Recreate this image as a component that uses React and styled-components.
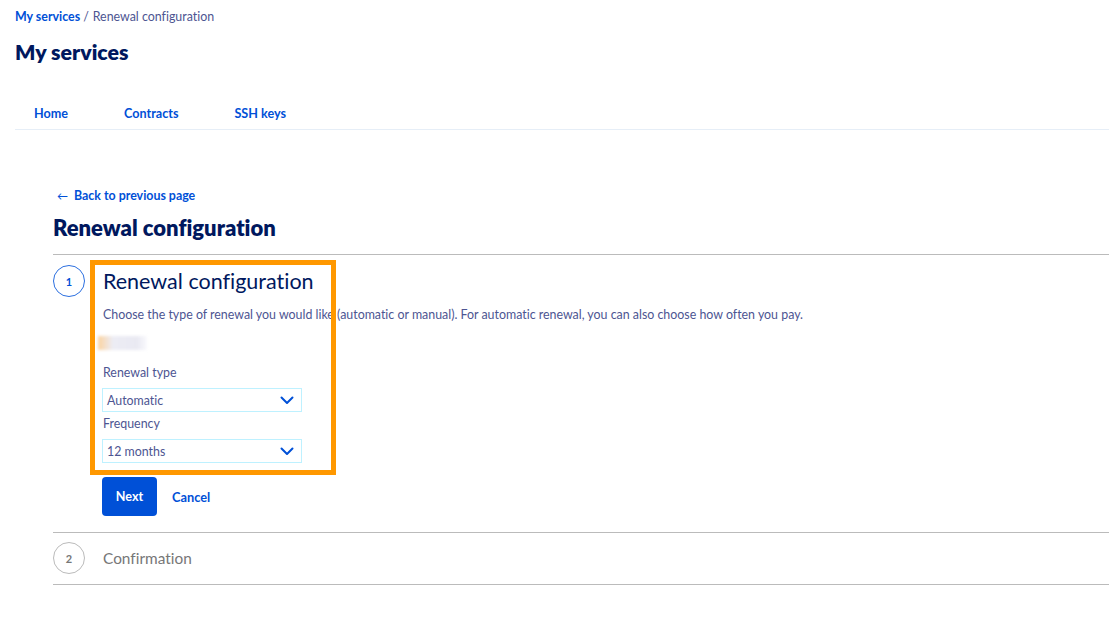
import React from 'react'
import styled, { createGlobalStyle } from 'styled-components'

const GlobalStyle = createGlobalStyle`
    body {
        margin: 0;
        background: #fff;
        font-family: Lato, "Open Sans", sans-serif;
        font-variant-ligatures: none;
    }
`

const blue = '#0050d7'
const navy = '#00185e'
const text = '#4d5592'

export default function App() {
    return <Page>
        <GlobalStyle />
        <Top>
            <Breadcrumb>
                <Crumb>My services</Crumb>
                <Sep>/</Sep>
                <Current>Renewal configuration</Current>
            </Breadcrumb>
            <PageTitle>My services</PageTitle>
        </Top>
        <Tabs>
            <Tab>Home</Tab>
            <Tab>Contracts</Tab>
            <Tab>SSH keys</Tab>
        </Tabs>
        <Main>
            <BackLink><Arrow>←</Arrow>Back to previous page</BackLink>
            <SectionTitle>Renewal configuration</SectionTitle>
            <Steps>
                <Step>
                    <StepNumber active>1</StepNumber>
                    <StepBody>
                        <Highlight />
                        <StepTitle active>Renewal configuration</StepTitle>
                        <Description>Choose the type of renewal you would like (automatic or manual). For automatic renewal, you can also choose how often you pay.</Description>
                        <Blurred />
                        <Field>
                            <Label>Renewal type</Label>
                            <Select>Automatic<Chevron /></Select>
                        </Field>
                        <Field>
                            <Label>Frequency</Label>
                            <Select>12 months<Chevron /></Select>
                        </Field>
                        <Actions>
                            <PrimaryButton>Next</PrimaryButton>
                            <LinkButton>Cancel</LinkButton>
                        </Actions>
                    </StepBody>
                </Step>
                <Step>
                    <StepNumber>2</StepNumber>
                    <StepBody>
                        <StepTitle>Confirmation</StepTitle>
                    </StepBody>
                </Step>
            </Steps>
        </Main>
    </Page>
}

const Chevron = () => <ChevronSvg viewBox="0 0 14 9" width="14" height="9">
    <path d="M1.5 1.5 L7 7 L12.5 1.5" fill="none" stroke={blue} strokeWidth="2" strokeLinecap="round" strokeLinejoin="round" />
</ChevronSvg>

const Page = styled.div`
    padding-left: 15px;
    color: ${text};
`

const Top = styled.div`
    padding-top: 9px;
`

const Breadcrumb = styled.div`
    display: flex;
    align-items: center;
    font-size: 12.4px;
    line-height: 16px;
`

const Crumb = styled.span`
    color: ${blue};
    font-weight: 700;
`

const Sep = styled.span`
    margin: 0 4px 0 3px;
`

const Current = styled.span`
    color: ${text};
`

const PageTitle = styled.h1`
    margin: 14px 0 0;
    font-size: 21.3px;
    line-height: 26px;
    font-weight: 800;
    color: ${navy};
`

const Tabs = styled.div`
    display: flex;
    margin-top: 35px;
    border-bottom: 1px solid #e6eef7;
    height: 29px;
`

const Tab = styled.div`
    padding: 0 19px;
    font-size: 12.6px;
    line-height: 28px;
    font-weight: 700;
    color: ${blue};
    margin-right: 18px;
`

const Main = styled.div`
    padding: 58px 0 0 38px;
`

const BackLink = styled.div`
    display: flex;
    align-items: center;
    font-size: 12.4px;
    line-height: 16px;
    font-weight: 700;
    color: ${blue};
    padding-left: 4px;
`

const Arrow = styled.span`
    font-size: 11px;
    margin-right: 6px;
    font-weight: 400;
`

const SectionTitle = styled.h2`
    margin: 10px 0 0;
    font-size: 22px;
    line-height: 28px;
    font-weight: 800;
    color: ${navy};
`

const Steps = styled.div`
    margin-top: 12px;
    border-top: 1px solid #bbb;
`

const Step = styled.div`
    display: flex;
    gap: 18px;
    padding: 10px 0 16px;
    border-bottom: 1px solid #bbb;

    &:last-child {
        padding: 9px 0 10px;
    }
`

const StepNumber = styled.div`
    flex: none;
    width: 30px;
    height: 30px;
    border-radius: 50%;
    border: 1px solid ${props => props.active ? '#2b6fe0' : '#bbb'};
    color: ${props => props.active ? blue : '#777'};
    font-size: 11px;
    font-weight: 700;
    display: flex;
    align-items: center;
    justify-content: center;
`

const StepBody = styled.div`
    position: relative;
    flex: 1;
`

const Highlight = styled.div`
    position: absolute;
    top: -5px;
    left: -13px;
    width: 236px;
    height: 205px;
    border: 5px solid #ff9800;
    pointer-events: none;
`

const StepTitle = styled.div`
    line-height: 32px;
    color: ${props => props.active ? navy : '#777'};
    font-size: ${props => props.active ? '21.5px' : '15.4px'};
`

const Description = styled.p`
    margin: 10px 0 0;
    font-size: 12.4px;
    line-height: 16px;
`

const Blurred = styled.div`
    margin: 13px 0 11px -5px;
    width: 49px;
    height: 14px;
    background: linear-gradient(90deg, #fbd3a0 0%, #ececf4 30%, #e9e9f2 80%, #fafafd 100%);
    filter: blur(1.5px);
`

const Field = styled.div`
    display: flex;
    flex-direction: column;
`

const Label = styled.div`
    font-size: 12.4px;
    line-height: 16px;
    margin-top: 4px;
`

const Select = styled.div`
    display: flex;
    align-items: center;
    justify-content: space-between;
    box-sizing: border-box;
    width: 200px;
    height: 24px;
    margin: 7px 0 0 -1px;
    padding: 0 7px 0 4px;
    border: 1px solid #bef1ff;
    font-size: 12.4px;
    color: ${text};
`

const ChevronSvg = styled.svg`
    display: block;
`

const Actions = styled.div`
    display: flex;
    align-items: center;
    gap: 15px;
    margin-top: 14px;
`

const PrimaryButton = styled.button`
    width: 55px;
    height: 39px;
    margin-left: -1px;
    border: none;
    border-radius: 4px;
    background: ${blue};
    color: #fff;
    font-family: inherit;
    font-size: 12.6px;
    font-weight: 700;
`

const LinkButton = styled.span`
    color: ${blue};
    font-size: 12.8px;
    font-weight: 700;
`
